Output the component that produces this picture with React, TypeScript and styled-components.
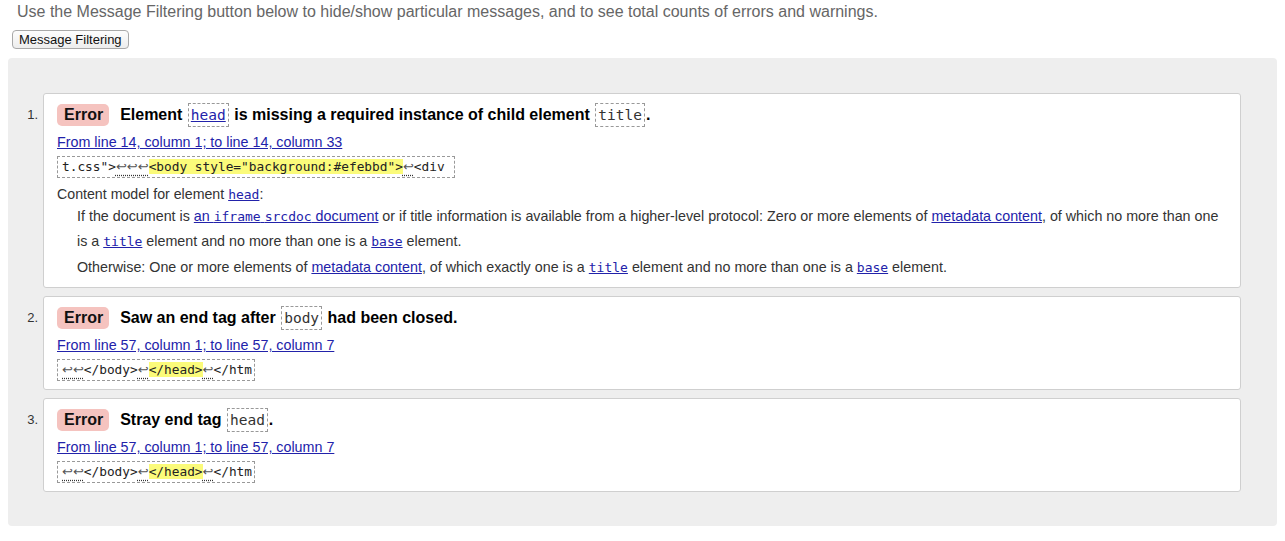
import React from 'react';
import styled, { createGlobalStyle } from 'styled-components';

const Global = createGlobalStyle`
  html, body { margin: 0; padding: 0; background: #fff; }
  body { font-family: "Liberation Sans", Arial, sans-serif; color: #333; }
`;

const Page = styled.div`
  padding: 3px 8px 16px;
`;

const Intro = styled.p`
  margin: 0 0 0 9px;
  font-size: 16px;
  line-height: 18px;
  color: #666;
`;

const FilterButton = styled.button`
  display: block;
  margin: 9px 0 0 4px;
  height: 19px;
  padding: 0 6px;
  font: 13px/17px "Liberation Sans", Arial, sans-serif;
  color: #111;
  background: linear-gradient(#fdfdfd, #ededed);
  border: 1px solid #a9a9a9;
  border-radius: 4px;
`;

const Panel = styled.ol`
  list-style: none;
  margin: 9px 0 0;
  padding: 35px 36px 34px 0;
  background: #eeeeee;
  border-radius: 4px;
  display: flex;
  flex-direction: column;
  gap: 8px;
`;

const Item = styled.li`
  display: grid;
  grid-template-columns: 35px 1fr;
`;

const Num = styled.span`
  text-align: right;
  padding: 10px 5px 0 0;
  font-size: 13px;
  line-height: 24px;
  color: #333;
`;

const Card = styled.div<{ $pb?: number }>`
  background: #fff;
  border: 1px solid #cfcfcf;
  border-radius: 3px;
  padding: 9px 15px ${p => p.$pb ?? 8}px 13px;
`;

const Title = styled.div`
  font-size: 16px;
  line-height: 24px;
  font-weight: bold;
  color: #000;
`;

const Badge = styled.span`
  display: inline-block;
  vertical-align: top;
  margin-top: 1px;
  background: #f5c3bf;
  border-radius: 5px;
  padding: 0 6px 0 7px;
  line-height: 22px;
  margin-right: 11px;
  color: #111;
`;

const TitleCode = styled.code<{ $link?: boolean }>`
  display: inline-block;
  vertical-align: top;
  font-family: "DejaVu Sans Mono", "Liberation Mono", monospace;
  font-size: 14.5px;
  font-weight: normal;
  line-height: 18px;
  padding: 2px 2px;
  margin: 0 1px;
  border: 1px dashed #999;
  color: ${p => (p.$link ? '#22a' : '#333')};
  text-decoration: ${p => (p.$link ? 'underline' : 'none')};
`;

const Location = styled.a`
  display: block;
  width: max-content;
  margin-top: 6px;
  font-size: 14.3px;
  line-height: 18px;
  color: #22a;
  text-decoration: underline;
`;

const Extract = styled.div`
  display: inline-block;
  margin-top: 5px;
  border: 1px dashed #999;
  padding: 2px 2px 2px 4px;
  font-family: "DejaVu Sans Mono", "Liberation Mono", monospace;
  font-size: 12.8px;
  line-height: 16px;
  white-space: pre;
  color: #222;
`;

const Lf = styled.span`
  font-family: "DejaVu Sans", sans-serif;
  font-size: 13px;
  color: #555;
  text-decoration: underline dotted #333;
  text-underline-offset: 4px;
`;

const Mark = styled.b`
  font-weight: normal;
  background: #fbfb7a;
`;

const ModelHead = styled.div`
  margin-top: 7px;
  font-size: 14.2px;
  line-height: 18px;
  color: #333;
`;

const ModelPara = styled.p`
  margin: 0 0 0 20px;
  font-size: 14.3px;
  line-height: 25px;
  color: #333;
  & + & { margin-top: 1px; }
`;

const Link = styled.a`
  color: #22a;
  text-decoration: underline;
`;

const Code = styled.code`
  font-family: "DejaVu Sans Mono", "Liberation Mono", monospace;
  font-size: 13px;
`;

const Row = styled.div``;

const lf = (n: number) => <Lf>{'↩'.repeat(n)}</Lf>;

const Extract2 = () => (
  <Row>
    <Extract>
      {lf(2)}{'</body>'}{lf(1)}<Mark>{'</head>'}</Mark>{lf(1)}{'</htm'}
    </Extract>
  </Row>
);

export default function App() {
  return (
    <Page>
      <Global />
      <Intro>
        Use the Message Filtering button below to hide/show particular messages, and to see total counts of errors and warnings.
      </Intro>
      <FilterButton>Message Filtering</FilterButton>
      <Panel>
        <Item>
          <Num>1.</Num>
          <Card $pb={7}>
            <Title>
              <Badge>Error</Badge>Element <TitleCode $link>head</TitleCode> is missing a required instance of child element <TitleCode>title</TitleCode>.
            </Title>
            <Location href="#">From line 14, column 1; to line 14, column 33</Location>
            <Row>
              <Extract>
                {'t.css">'}{lf(3)}<Mark>{'<body style="background:#efebbd">'}</Mark>{lf(1)}{'<div '}
              </Extract>
            </Row>
            <ModelHead>
              Content model for element <Link href="#"><Code>head</Code></Link>:
            </ModelHead>
            <ModelPara>
              If the document is <Link href="#">an <Code>iframe</Code> <Code>srcdoc</Code> document</Link> or if title information is available from a higher-level protocol: Zero or more elements of <Link href="#">metadata content</Link>, of which no more than one is a <Link href="#"><Code>title</Code></Link> element and no more than one is a <Link href="#"><Code>base</Code></Link> element.
            </ModelPara>
            <ModelPara>
              Otherwise: One or more elements of <Link href="#">metadata content</Link>, of which exactly one is a <Link href="#"><Code>title</Code></Link> element and no more than one is a <Link href="#"><Code>base</Code></Link> element.
            </ModelPara>
          </Card>
        </Item>
        <Item>
          <Num>2.</Num>
          <Card>
            <Title>
              <Badge>Error</Badge>Saw an end tag after <TitleCode>body</TitleCode> had been closed.
            </Title>
            <Location href="#">From line 57, column 1; to line 57, column 7</Location>
            <Extract2 />
          </Card>
        </Item>
        <Item>
          <Num>3.</Num>
          <Card>
            <Title>
              <Badge>Error</Badge>Stray end tag <TitleCode>head</TitleCode>.
            </Title>
            <Location href="#">From line 57, column 1; to line 57, column 7</Location>
            <Extract2 />
          </Card>
        </Item>
      </Panel>
    </Page>
  );
}
